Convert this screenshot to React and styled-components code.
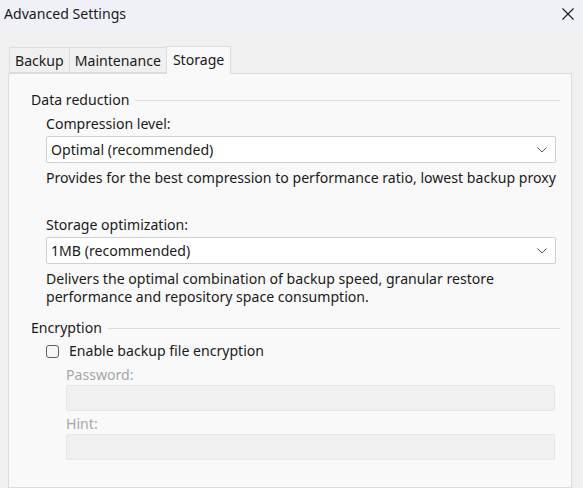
import React from 'react';
import styled, { createGlobalStyle } from 'styled-components';

const GlobalStyle = createGlobalStyle`
  html, body {
    margin: 0;
    padding: 0;
    background: #f0f0f0;
  }
  body {
    font-family: "Noto Sans", "Open Sans", sans-serif;
    font-size: 14.1px;
    color: #1a1a1a;
  }
`;

const Window = styled.div`
  width: 583px;
  height: 488px;
  overflow: hidden;
  display: flex;
  flex-direction: column;
  background: #f0f0f0;
`;

const TitleBar = styled.div`
  height: 30px;
  flex-shrink: 0;
  display: flex;
  align-items: center;
  justify-content: space-between;
  padding: 0 8px 0 4px;
  background: #eff1f6;
  line-height: 20px;
  box-sizing: border-box;
  padding-bottom: 2px;
`;

const CloseButton = styled.button`
  border: none;
  background: none;
  padding: 0;
  width: 14px;
  height: 14px;
  display: flex;
  align-items: center;
  justify-content: center;
  cursor: pointer;
`;

const Body = styled.div`
  flex: 1;
  display: flex;
  flex-direction: column;
  padding: 16px 11px 0 8px;
  min-height: 0;
`;

const TabStrip = styled.div`
  display: flex;
  align-items: flex-end;
  padding-left: 2px;
  height: 27px;
  flex-shrink: 0;
`;

const Tab = styled.div`
  height: ${(p) => (p.$active ? '28px' : '26px')};
  box-sizing: border-box;
  padding: 0 ${(p) => (p.$active ? '6px' : '5px')};
  display: flex;
  align-items: center;
  border: 1px solid #dcdcdc;
  border-bottom: ${(p) => (p.$active ? 'none' : '1px solid #dcdcdc')};
  margin-left: -1px;
  background: ${(p) => (p.$active ? '#f9f9f9' : '#f0f0f0')};
  position: relative;
  z-index: ${(p) => (p.$active ? 2 : 1)};
  margin-bottom: ${(p) => (p.$active ? '-1px' : '0')};
  padding-bottom: ${(p) => (p.$active ? '3px' : '0')};
  color: #1a1a1a;
`;

const Panel = styled.div`
  flex: 1;
  border: 1px solid #dcdcdc;
  background: #f9f9f9;
  padding: 16px 11px 0 22px;
  display: flex;
  flex-direction: column;
`;

const GroupHeader = styled.div`
  display: flex;
  align-items: center;
  gap: 6px;
  line-height: 20px;
  margin-top: ${(p) => p.$top || 0}px;

  &::after {
    content: '';
    flex: 1;
    height: 1px;
    background: #dcdcdc;
    margin-top: 1px;
  }
`;

const GroupBody = styled.div`
  display: flex;
  flex-direction: column;
  padding: 0 4px 0 15px;
`;

const Label = styled.div`
  line-height: 20px;
  margin-top: ${(p) => p.$top || 0}px;
  color: ${(p) => (p.$disabled ? '#a6a6a6' : '#1a1a1a')};
`;

const Select = styled.div`
  height: 27px;
  box-sizing: border-box;
  margin-top: 2px;
  border: 1px solid #d0d0d0;
  border-radius: 2px;
  background: #ffffff;
  display: flex;
  align-items: center;
  justify-content: space-between;
  padding: 0 8px 0 4px;
`;

const Hint = styled.div`
  line-height: 18px;
  margin-top: ${(p) => p.$top || 0}px;
`;

const CheckRow = styled.label`
  display: flex;
  align-items: center;
  gap: 10px;
  line-height: 20px;
  margin-top: 3px;
`;

const CheckBox = styled.span`
  width: 13px;
  height: 13px;
  box-sizing: border-box;
  border: 1px solid #5f5f5f;
  border-radius: 3px;
  background: #f6f6f6;
`;

const Fields = styled.div`
  display: flex;
  flex-direction: column;
  padding: 0 1px 0 20px;
`;

const Input = styled.div`
  height: 26px;
  box-sizing: border-box;
  border: 1px solid #e6e6e6;
  border-radius: 2px;
  background: #f0f0f0;
`;

const Chevron = () => (
  <svg width="10" height="6" viewBox="0 0 10 6">
    <path d="M0.5 0.5 L5 5 L9.5 0.5" fill="none" stroke="#5c5c5c" strokeWidth="1" />
  </svg>
);

export default function App() {
  return (
    <>
      <GlobalStyle />
      <Window>
        <TitleBar>
          <span>Advanced Settings</span>
          <CloseButton aria-label="Close">
            <svg width="12" height="12" viewBox="0 0 12 12">
              <path d="M0.5 0.5 L11.5 11.5 M11.5 0.5 L0.5 11.5" stroke="#1a1a1a" strokeWidth="1.1" />
            </svg>
          </CloseButton>
        </TitleBar>
        <Body>
          <TabStrip>
            <Tab>Backup</Tab>
            <Tab>Maintenance</Tab>
            <Tab $active>Storage</Tab>
          </TabStrip>
          <Panel>
            <GroupHeader>Data reduction</GroupHeader>
            <GroupBody>
              <Label $top={4}>Compression level:</Label>
              <Select>
                <span>Optimal (recommended)</span>
                <Chevron />
              </Select>
              <Hint $top={6}>
                Provides for the best compression to performance ratio, lowest backup proxy
              </Hint>
              <Label $top={28}>Storage optimization:</Label>
              <Select>
                <span>1MB (recommended)</span>
                <Chevron />
              </Select>
              <Hint $top={6}>
                Delivers the optimal combination of backup speed, granular restore
                <br />
                performance and repository space consumption.
              </Hint>
            </GroupBody>
            <GroupHeader $top={12}>Encryption</GroupHeader>
            <GroupBody>
              <CheckRow>
                <CheckBox />
                <span>Enable backup file encryption</span>
              </CheckRow>
              <Fields>
                <Label $top={4} $disabled>Password:</Label>
                <Input />
                <Label $top={3} $disabled>Hint:</Label>
                <Input />
              </Fields>
            </GroupBody>
          </Panel>
        </Body>
      </Window>
    </>
  );
}
